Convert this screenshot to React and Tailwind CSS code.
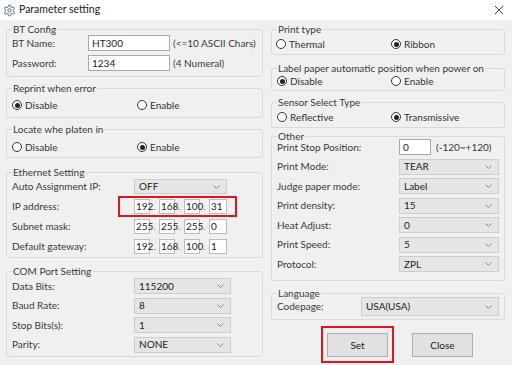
import React from 'react';

const font = { fontFamily: 'Lato, "Noto Sans", sans-serif' };

function Group({ label, className, children }) {
  return (
    <div className={`relative border border-[#d9d9d9] rounded-[3px] ${className}`}>
      <span className="absolute left-[5px] -top-[7px] px-[1px] bg-[#f0f0f0] leading-[12px] text-[#3a3a3a]">
        {label}
      </span>
      {children}
    </div>
  );
}

function Radio({ label, checked, width }) {
  return (
    <div className={`flex items-center h-[12px] ${width}`}>
      <span className="w-[10px] h-[10px] rounded-full border border-[#333] bg-white flex items-center justify-center">
        {checked && <span className="w-[5px] h-[5px] rounded-full bg-[#222]" />}
      </span>
      <span className="ml-[3px] text-[#333]">{label}</span>
    </div>
  );
}

function Chevron() {
  return (
    <svg width="7" height="4" viewBox="0 0 7 4" className="ml-auto mr-[6px]">
      <polyline points="0.5,0.5 3.5,3.5 6.5,0.5" fill="none" stroke="#8a8a8a" strokeWidth="1" />
    </svg>
  );
}

function Select({ value, className }) {
  return (
    <div className={`flex items-center bg-[#e5e5e5] border border-[#cdcdcd] pl-[4px] text-[#222] ${className}`}>
      <span>{value}</span>
      <Chevron />
    </div>
  );
}

function Field({ label, labelW, children }) {
  return (
    <div className="flex items-center">
      <span className={`text-[#3a3a3a] ${labelW}`}>{label}</span>
      {children}
    </div>
  );
}

function IpBoxes({ parts }) {
  return (
    <div className="flex items-center h-[15px]">
      {parts.map((p, i) => (
        <React.Fragment key={i}>
          {i > 0 && <span className="w-[9px] text-center text-[#888] leading-[15px]">.</span>}
          <span
            className={`h-[15px] border border-[#bdbdbd] bg-white pl-[1px] leading-[13px] text-[#222] ${
              i === 3 ? 'w-[18px]' : 'w-[16px]'
            }`}
          >
            {p}
          </span>
        </React.Fragment>
      ))}
    </div>
  );
}

export default function App() {
  return (
    <div className="w-[512px] h-[365px] bg-[#f0f0f0] text-[10px] overflow-hidden" style={font}>
      {/* Title bar */}
      <div className="h-[20px] bg-white flex items-center pl-[3px]">
        <svg width="13" height="13" viewBox="0 0 24 24" fill="none" stroke="#7d8a99" strokeWidth="2">
          <path d="M12.22 2h-.44a2 2 0 0 0-2 2v.18a2 2 0 0 1-1 1.730l-.43.25a2 2 0 0 1-2 0l-.15-.08a2 2 0 0 0-2.73.73l-.22.38a2 2 0 0 0 .73 2.73l.15.1a2 2 0 0 1 1 1.72v.51a2 2 0 0 1-1 1.74l-.15.09a2 2 0 0 0-.73 2.73l.22.38a2 2 0 0 0 2.73.73l.15-.08a2 2 0 0 1 2 0l.43.25a2 2 0 0 1 1 1.73V20a2 2 0 0 0 2 2h.44a2 2 0 0 0 2-2v-.18a2 2 0 0 1 1-1.73l.43-.25a2 2 0 0 1 2 0l.15.08a2 2 0 0 0 2.73-.73l.22-.39a2 2 0 0 0-.73-2.73l-.15-.08a2 2 0 0 1-1-1.74v-.5a2 2 0 0 1 1-1.74l.15-.09a2 2 0 0 0 .73-2.73l-.22-.38a2 2 0 0 0-2.73-.73l-.15.08a2 2 0 0 1-2 0l-.43-.25a2 2 0 0 1-1-1.73V4a2 2 0 0 0-2-2z" />
          <circle cx="12" cy="12" r="3" />
        </svg>
        <span className="ml-[3px] text-[10.5px] text-[#222]">Parameter setting</span>
        <svg width="10" height="10" viewBox="0 0 10 10" className="ml-auto mr-[8px]">
          <path d="M1 1L9 9M9 1L1 9" stroke="#333" strokeWidth="0.9" />
        </svg>
      </div>

      <div className="flex px-[6px] pt-[9px] gap-[8px]">
        {/* Left column */}
        <div className="w-[257px] flex flex-col">
          <Group label="BT Config" className="h-[48px] pt-[5px] pl-[5px] flex flex-col gap-[4px]">
            <div className="flex items-center h-[16px]">
              <span className="w-[76px] text-[#3a3a3a]">BT Name:</span>
              <span className="w-[82px] h-[16px] border border-[#a9a9a9] bg-white pl-[3px] leading-[14px] text-[#222]">HT300</span>
              <span className="ml-[3px] text-[#3a3a3a]">(&lt;=10 ASCII Chars)</span>
            </div>
            <div className="flex items-center h-[16px]">
              <span className="w-[76px] text-[#3a3a3a]">Password:</span>
              <span className="w-[82px] h-[16px] border border-[#a9a9a9] bg-white pl-[3px] leading-[14px] text-[#222]">1234</span>
              <span className="ml-[3px] text-[#3a3a3a]">(4 Numeral)</span>
            </div>
          </Group>

          <Group label="Reprint when error" className="mt-[11px] h-[30px] pt-[10px] pl-[5px] flex">
            <Radio label="Disable" checked width="w-[125px]" />
            <Radio label="Enable" />
          </Group>

          <Group label="Locate whe platen in" className="mt-[11px] h-[29px] pt-[11px] pl-[5px] flex">
            <Radio label="Disable" width="w-[125px]" />
            <Radio label="Enable" checked />
          </Group>

          <Group label="Ethernet Setting" className="mt-[14px] h-[86px] pt-[6px] pl-[5px] flex flex-col gap-[5px]">
            <Field label="Auto Assignment IP:" labelW="w-[122px]">
              <Select value="OFF" className="w-[93px] h-[15px]" />
            </Field>
            <Field label="IP address:" labelW="w-[122px]">
              <div className="relative">
                <IpBoxes parts={['192', '168', '100', '31']} />
                <div className="absolute -left-[16px] -right-[10px] -top-[3px] -bottom-[3px] border-2 border-[#e3141c]" />
              </div>
            </Field>
            <Field label="Subnet mask:" labelW="w-[122px]">
              <IpBoxes parts={['255', '255', '255', '0']} />
            </Field>
            <Field label="Default gateway:" labelW="w-[122px]">
              <IpBoxes parts={['192', '168', '100', '1']} />
            </Field>
          </Group>

          <Group label="COM Port Setting" className="mt-[13px] h-[86px] pt-[6px] pl-[5px] flex flex-col gap-[3.5px]">
            {[
              ['Data Bits:', '115200'],
              ['Baud Rate:', '8'],
              ['Stop Bits(s):', '1'],
              ['Parity:', 'NONE'],
            ].map(([l, v]) => (
              <Field key={l} label={l} labelW="w-[122px]">
                <Select value={v} className="w-[97px] h-[16px]" />
              </Field>
            ))}
          </Group>
        </div>

        {/* Right column */}
        <div className="w-[234px] flex flex-col">
          <Group label="Print type" className="h-[26px] pt-[8px] pl-[4px] flex">
            <Radio label="Thermal" width="w-[115px]" />
            <Radio label="Ribbon" checked />
          </Group>

          <Group label="Label paper automatic position when power on" className="mt-[13px] h-[23px] pt-[6px] pl-[5px] flex">
            <Radio label="Disable" checked width="w-[114px]" />
            <Radio label="Enable" />
          </Group>

          <Group label="Sensor Select Type" className="mt-[11px] h-[26px] pt-[8px] pl-[5px] flex">
            <Radio label="Reflective" width="w-[114px]" />
            <Radio label="Transmissive" checked />
          </Group>

          <Group label="Other" className="mt-[8px] h-[145px] pt-[2px] pl-[5px] flex flex-col gap-[3.5px]">
            <Field label="Print Stop Position:" labelW="w-[122px]">
              <span className="w-[32px] h-[16px] border border-[#a9a9a9] bg-white pl-[3px] leading-[14px] text-[#222]">0</span>
              <span className="ml-[5px] text-[#3a3a3a]">(-120~+120)</span>
            </Field>
            {[
              ['Print Mode:', 'TEAR'],
              ['Judge paper mode:', 'Label'],
              ['Print density:', '15'],
              ['Heat Adjust:', '0'],
              ['Print Speed:', '5'],
              ['Protocol:', 'ZPL'],
            ].map(([l, v]) => (
              <Field key={l} label={l} labelW="w-[122px]">
                <Select value={v} className="w-[100px] h-[16px]" />
              </Field>
            ))}
          </Group>

          <Group label="Language" className="mt-[12px] h-[27px] pt-[3px] pl-[5px] flex flex-col">
            <Field label="Codepage:" labelW="w-[84px]">
              <Select value="USA(USA)" className="w-[138px] h-[19px]" />
            </Field>
          </Group>

          <div className="mt-[13px] flex pl-[56px] gap-[24px]">
            <div className="relative">
              <button className="w-[61px] h-[24px] bg-[#e1e1e1] border border-[#adadad] text-[#222]">Set</button>
              <div className="absolute -left-[6px] -right-[6px] -top-[7px] -bottom-[6px] border-2 border-[#e3141c]" />
            </div>
            <button className="w-[61px] h-[24px] bg-[#e1e1e1] border border-[#adadad] text-[#222]">Close</button>
          </div>
        </div>
      </div>
    </div>
  );
}
